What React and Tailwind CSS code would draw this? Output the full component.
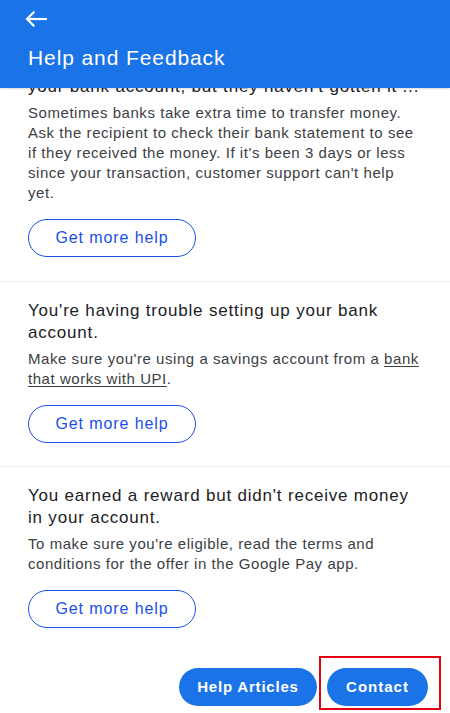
import React from "react";

const font = { fontFamily: '"Liberation Sans", Arial, sans-serif' };

function HelpButton() {
  return (
    <button className="mt-4 flex h-[38px] w-[168px] items-center justify-center rounded-full border border-[#1a4fe8] bg-white text-[16px] font-medium tracking-[0.9px] text-[#1a4fe8]">
      Get more help
    </button>
  );
}

export default function App() {
  return (
    <div className="relative flex h-[713px] w-[450px] flex-col overflow-hidden bg-white" style={font}>
      <header className="relative z-10 h-[88px] shrink-0 bg-[#1b73e8] shadow-[0_1px_2px_rgba(0,0,0,0.15)]">
        <div className="pl-[25px] pt-[11px]">
          <svg width="22" height="16" viewBox="0 0 22 16" fill="none" stroke="white" strokeWidth="2.2" strokeLinecap="square">
            <path d="M21 8H3" />
            <path d="M8.5 1.5L2 8l6.5 6.5" />
          </svg>
        </div>
        <h1 className="mt-[18px] pl-[28px] text-[21px] leading-[26px] tracking-[0.9px] text-white">Help and Feedback</h1>
      </header>

      <main className="flex-1 overflow-hidden">
        <section className="-mt-[12px] border-b border-[#ececec] px-[28px] pb-[24px]">
          <h2 className="whitespace-nowrap text-[17px] leading-[22px] tracking-[0.8px] text-[#202124]">
            your bank account, but they haven't gotten it ...
          </h2>
          <p className="mt-[5px] text-[15px] leading-[20px] tracking-[0.55px] text-[#3c4043]">
            Sometimes banks take extra time to transfer money. Ask the recipient to check their bank statement to see if they received the money. If it's been 3 days or less since your transaction, customer support can't help yet.
          </p>
          <HelpButton />
        </section>

        <section className="border-b border-[#ececec] px-[28px] pb-[23px] pt-[18px]">
          <h2 className="text-[17px] leading-[22px] tracking-[0.8px] text-[#202124]">
            You're having trouble setting up your bank account.
          </h2>
          <p className="mt-[5px] text-[15px] leading-[20px] tracking-[0.55px] text-[#3c4043]">
            Make sure you're using a savings account from a <span className="underline underline-offset-2">bank that works with UPI</span>.
          </p>
          <HelpButton />
        </section>

        <section className="px-[28px] pb-[24px] pt-[18px]">
          <h2 className="text-[17px] leading-[22px] tracking-[0.8px] text-[#202124]">
            You earned a reward but didn't receive money in your account.
          </h2>
          <p className="mt-[5px] text-[15px] leading-[20px] tracking-[0.55px] text-[#3c4043]">
            To make sure you're eligible, read the terms and conditions for the offer in the Google Pay app.
          </p>
          <HelpButton />
        </section>
      </main>

      <footer className="flex h-[61px] shrink-0 items-start justify-end gap-[10px] pr-[22px] pt-[16px]">
        <button className="flex h-[38px] w-[138px] items-center justify-center rounded-full bg-[#1b73e8] text-[15px] font-bold tracking-[0.8px] text-white">
          Help Articles
        </button>
        <button className="relative flex h-[38px] w-[101px] items-center justify-center rounded-full bg-[#1b73e8] text-[15px] font-bold tracking-[1px] text-white">
          Contact
          <span className="pointer-events-none absolute -left-[8px] -top-[12px] h-[54px] w-[122px] border-2 border-[#e4000f]" />
        </button>
      </footer>
    </div>
  );
}
